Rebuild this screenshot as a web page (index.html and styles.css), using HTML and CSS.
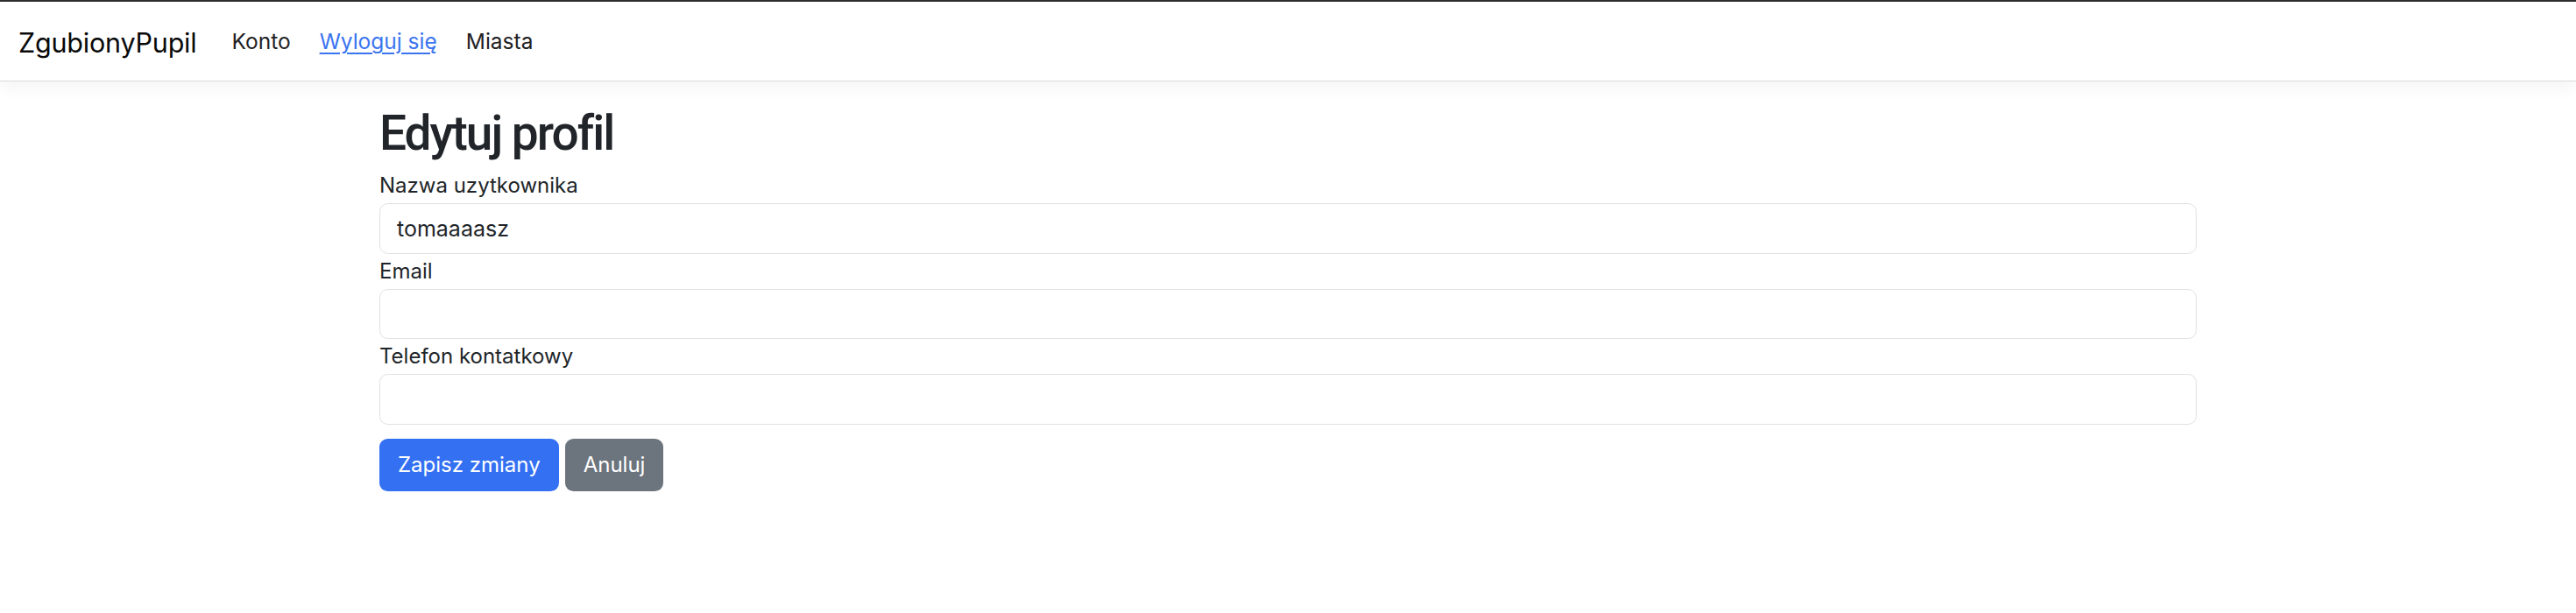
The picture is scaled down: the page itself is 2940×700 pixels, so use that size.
FILE: index.html
```html
<!DOCTYPE html>
<html lang="pl">
<head>
<meta charset="utf-8">
<title>Edytuj profil</title>
<link rel="stylesheet" href="styles.css">
</head>
<body>
<nav class="navbar">
  <a class="brand" href="#">ZgubionyPupil</a>
  <ul class="nav-links">
    <li><a class="nav-link" href="#">Konto</a></li>
    <li><a class="nav-link active-link" href="#">Wyloguj się</a></li>
    <li><a class="nav-link" href="#">Miasta</a></li>
  </ul>
</nav>
<main class="container">
  <h1 class="title">Edytuj profil</h1>
  <form class="form">
    <div class="field">
      <label class="label" for="username">Nazwa uzytkownika</label>
      <input class="input" id="username" type="text" value="tomaaaasz">
    </div>
    <div class="field">
      <label class="label" for="email">Email</label>
      <input class="input" id="email" type="email" value="">
    </div>
    <div class="field">
      <label class="label" for="phone">Telefon kontatkowy</label>
      <input class="input" id="phone" type="text" value="">
    </div>
    <div class="actions">
      <button class="btn btn-primary" type="submit">Zapisz zmiany</button>
      <button class="btn btn-secondary" type="button">Anuluj</button>
    </div>
  </form>
</main>
</body>
</html>
```

FILE: styles.css
```css
* {
  box-sizing: border-box;
}

body {
  margin: 0;
  background: #ffffff;
  font-family: Inter, "Noto Sans", sans-serif;
  color: #212529;
}

.navbar {
  display: flex;
  align-items: center;
  height: 93px;
  padding: 0 0 0 21px;
  border-top: 2px solid #2d2d30;
  border-bottom: 1px solid #dcdcde;
  background: #ffffff;
  box-shadow: 0 8px 18px rgba(0, 0, 0, 0.045);
  position: relative;
}

.brand {
  font-size: 30.5px;
  color: #0a0a0a;
  text-decoration: none;
  letter-spacing: -0.2px;
  margin-right: 40px;
  padding-top: 2px;
}

.nav-links {
  display: flex;
  gap: 33px;
  list-style: none;
  margin: 0;
  padding: 0;
}

.nav-link {
  font-size: 24.5px;
  color: #1f2124;
  text-decoration: none;
}

.active-link {
  color: #3b74f0;
  text-decoration: underline;
  text-underline-offset: 4px;
  text-decoration-thickness: 2px;
}

.container {
  width: 2074px;
  margin: 0 auto;
  padding-top: 26px;
}

.title {
  margin: 0 0 6px;
  font-family: Roboto, Inter, sans-serif;
  font-size: 55px;
  font-weight: 500;
  line-height: 67px;
  letter-spacing: -2px;
}

.form {
  display: flex;
  flex-direction: column;
}

.field {
  display: flex;
  flex-direction: column;
}

.label {
  font-size: 24px;
  line-height: 40px;
}

.input {
  height: 57.6px;
  width: 100%;
  padding: 0 19px;
  border: 1.6px solid #dfe1e4;
  border-radius: 9.6px;
  font-family: Inter, "Noto Sans", sans-serif;
  font-size: 25px;
  color: #212529;
  background: #ffffff;
  outline: none;
}

.actions {
  display: flex;
  gap: 7px;
  margin-top: 16px;
}

.btn {
  height: 60px;
  padding: 0 21px;
  border: none;
  border-radius: 9.6px;
  font-family: Inter, "Noto Sans", sans-serif;
  font-size: 24px;
  color: #ffffff;
  cursor: pointer;
}

.btn-primary {
  background: #3370f2;
}

.btn-secondary {
  background: #6c747d;
}
```
